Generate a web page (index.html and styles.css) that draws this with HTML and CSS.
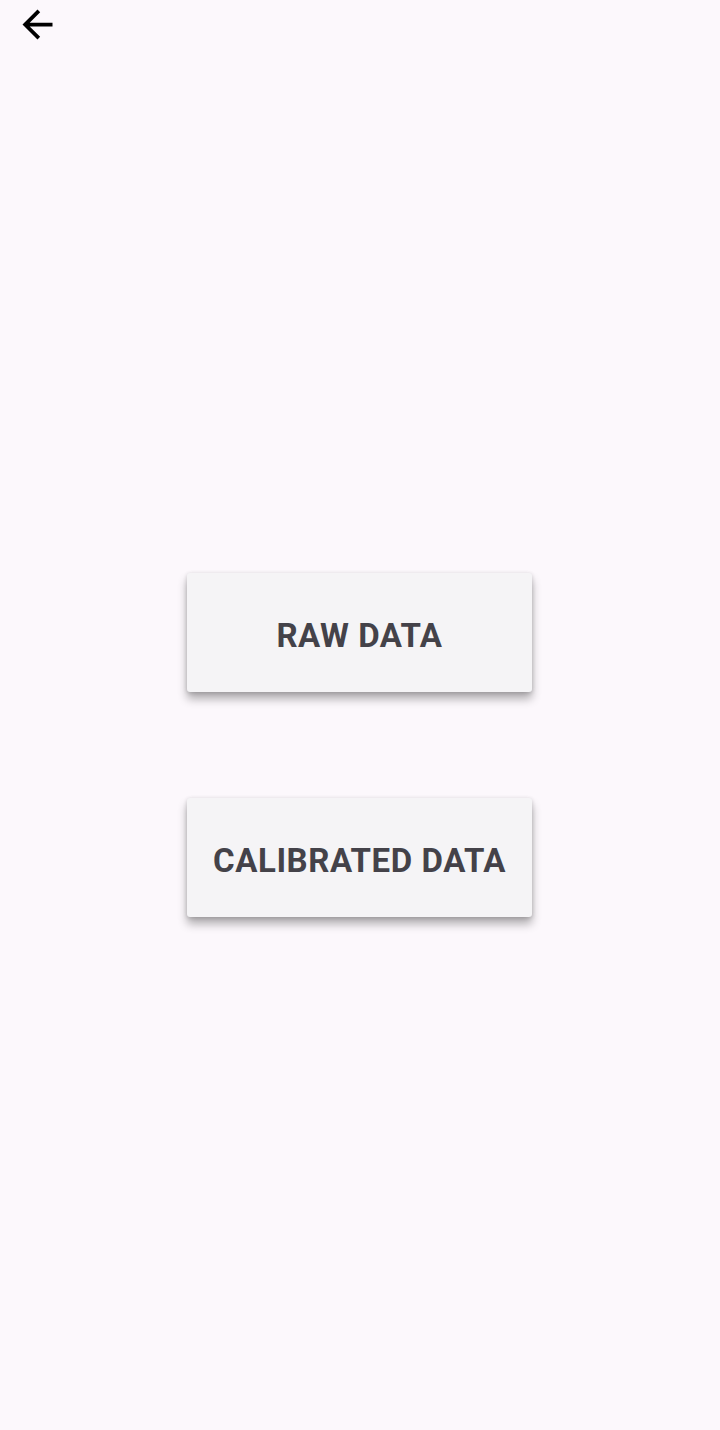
FILE: index.html
```html
<!DOCTYPE html>
<html>
<head>
<meta charset="utf-8">
<link rel="stylesheet" href="styles.css">
</head>
<body>
<div class="screen">
  <header class="toolbar">
    <button class="back" aria-label="Back">
      <svg viewBox="0 0 24 24" width="45" height="45"><path d="M20 11H7.83l5.59-5.59L12 4l-8 8 8 8 1.41-1.41L7.83 13H20v-2z" fill="#000"/></svg>
    </button>
  </header>
  <main class="actions">
    <button class="data-btn">RAW DATA</button>
    <button class="data-btn">CALIBRATED DATA</button>
  </main>
</div>
</body>
</html>
```
FILE: styles.css
```css
html, body {
  margin: 0;
  padding: 0;
}
body {
  background: #fcf8fc;
  font-family: Roboto, "Liberation Sans", sans-serif;
}
.screen {
  width: 720px;
  height: 1430px;
  display: flex;
  flex-direction: column;
}
.toolbar {
  height: 48px;
  display: flex;
  align-items: flex-start;
}
.back {
  margin: 2px 0 0 15px;
  padding: 0;
  border: 0;
  background: none;
  width: 45px;
  height: 45px;
  display: block;
}
.back svg {
  display: block;
}
.actions {
  margin-top: 525px;
  display: flex;
  flex-direction: column;
  align-items: center;
  gap: 106px;
}
.data-btn {
  width: 345px;
  height: 119px;
  margin-left: -1px;
  border: 0;
  border-radius: 3px;
  background: #f5f4f6;
  color: #444249;
  font-family: Roboto, "Liberation Sans", sans-serif;
  font-weight: 700;
  font-size: 33px;
  letter-spacing: 0.55px;
  box-shadow: 0 7px 10px rgba(0, 0, 0, 0.3), 0 1px 4px rgba(0, 0, 0, 0.16);
  padding: 5px 0 0 0;
}
```
